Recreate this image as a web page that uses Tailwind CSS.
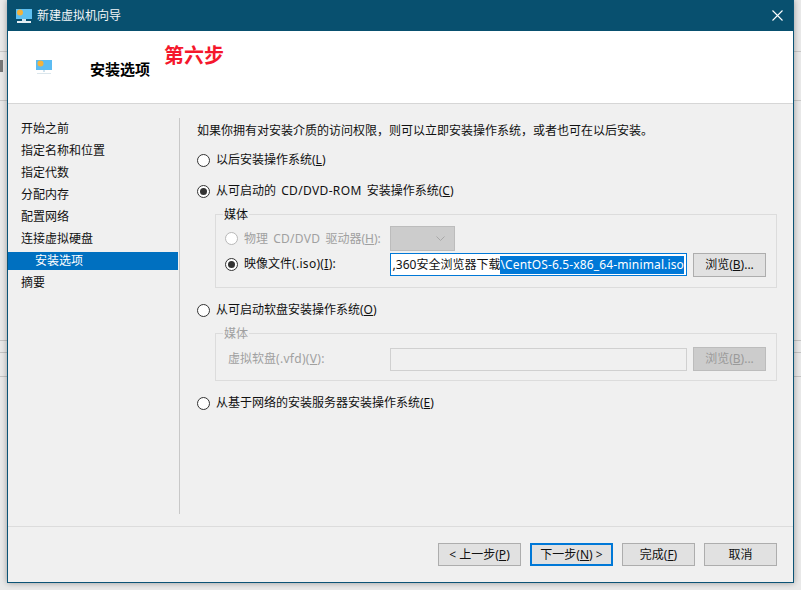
<!DOCTYPE html>
<html lang="zh-CN">
<head>
<meta charset="UTF-8">
<title>新建虚拟机向导</title>
<script src="https://cdn.jsdelivr.net/npm/@tailwindcss/browser@4"></script>
</head>
<body class="relative w-[801px] h-[590px] overflow-hidden bg-[#e9e9e9] text-[12px] leading-[16px] text-[#111] font-['Noto_Sans','Noto_Sans_CJK_SC',sans-serif]">
  <!-- app behind the dialog -->
  <div class="absolute left-0 right-0 top-[51px] h-px bg-[#c8c8c8]"></div>
  <div class="absolute left-0 right-0 top-[100px] h-px bg-[#c8c8c8]"></div>
  <div class="absolute left-0 right-0 top-[340px] h-px bg-[#c4c4c4]"></div>
  <div class="absolute left-0 right-0 top-[352px] h-px bg-[#c4c4c4]"></div>
  <div class="absolute left-0 right-0 top-[376px] h-px bg-[#c4c4c4]"></div>
  <div class="absolute left-0 top-[60px] w-[3px] h-[12px] bg-[#777]"></div>

  <!-- dialog -->
  <div class="relative ml-[7px] w-[787px] h-[583px] flex flex-col border-x border-b border-[#0b5376] bg-[#f0f0f0] shadow-[0_0_6px_rgba(0,0,0,0.35)]">
    <div class="h-[31px] shrink-0 flex items-center bg-[#08506f] text-[#f2f6f8]">
      <svg class="ml-[8px] w-[16px] h-[16px]" viewBox="0 0 16 16"><rect x="0" y="1" width="16" height="10" fill="#5fc0f2"/><circle cx="4" cy="4.5" r="3" fill="#f3b23c"/><rect x="6" y="11" width="4" height="2" fill="#cfe2ee"/><rect x="1" y="13" width="14" height="2" fill="#e6eef3"/></svg>
      <span class="ml-[5px] text-[12px]">新建虚拟机向导</span>
      <svg class="ml-auto mr-[10px] w-[11px] h-[11px]" viewBox="0 0 11 11" fill="none" stroke="#fff" stroke-width="1.1"><path d="M0.5 0.5L10.5 10.5M10.5 0.5L0.5 10.5"/></svg>
    </div>
    <div class="h-[73px] shrink-0 flex items-start bg-white border-b border-[#d6d6d6]">
      <svg class="ml-[28px] mt-[29px] w-[16px] h-[15px]" viewBox="0 0 16 15"><rect x="0" y="0" width="16" height="10" fill="#5cbcf2"/><circle cx="4.5" cy="3.5" r="3" fill="#f3b23c"/><rect x="7" y="10" width="2" height="2" fill="#cfe2ee"/><rect x="1" y="13" width="14" height="1" fill="#dbe6ec"/></svg>
      <span class="ml-[38px] mt-[29px] text-[15px] leading-[18px] font-bold text-black">安装选项</span>
      <span class="ml-[14px] mt-[13px] text-[20px] leading-[24px] font-bold text-[#f5172c]">第六步</span>
    </div>
    <div class="flex-1 flex min-h-0">
      <nav class="w-[170px] shrink-0 pt-[14px] flex flex-col">
        <div class="h-[22px] pl-[13px] flex items-center">开始之前</div>
        <div class="h-[22px] pl-[13px] flex items-center">指定名称和位置</div>
        <div class="h-[22px] pl-[13px] flex items-center">指定代数</div>
        <div class="h-[22px] pl-[13px] flex items-center">分配内存</div>
        <div class="h-[22px] pl-[13px] flex items-center">配置网络</div>
        <div class="h-[22px] pl-[13px] flex items-center">连接虚拟硬盘</div>
        <div class="h-[18px] mt-[2px] pl-[27px] flex items-center bg-[#0070c0] text-white">安装选项</div>
        <div class="h-[22px] mt-[2px] pl-[13px] flex items-center">摘要</div>
      </nav>
      <div class="w-px ml-px mt-[14px] h-[396px] bg-[#c8c8c8]"></div>
      <main class="flex-1 pl-[17px] pt-[19px] pr-[16px]">
        <p class="h-[16px]">如果你拥有对安装介质的访问权限，则可以立即安装操作系统，或者也可在以后安装。</p>
        <label class="mt-[13px] h-[16px] flex items-center gap-[6px]">
          <span class="w-[13px] h-[13px] rounded-full border border-[#333] bg-white"></span><span>以后安装操作系统(<u>L</u>)</span>
        </label>
        <label class="mt-[15px] h-[16px] flex items-center gap-[6px]">
          <span class="w-[13px] h-[13px] rounded-full border border-[#333] bg-white flex items-center justify-center"><span class="w-[7px] h-[7px] rounded-full bg-[#333]"></span></span><span class="[word-spacing:2px]">从可启动的 <span class="tracking-[0.35px]">CD/DVD-ROM</span> 安装操作系统(<u>C</u>)</span>
        </label>
        <fieldset class="mt-[15px] ml-[18px] w-[562px] h-[74px] relative border border-[#dcdcdc]">
          <legend class="absolute left-[7px] -top-[7px] px-px bg-[#f0f0f0] leading-[14px]">媒体</legend>
          <div class="pl-[9px] pt-[11px] flex items-center">
            <span class="w-[13px] h-[13px] rounded-full border border-[#b8b8b8] bg-white"></span>
            <span class="ml-[6px] w-[146px] text-[#a0a0a0] [word-spacing:2px]">物理 <span class="tracking-[0.3px]">CD/DVD</span> 驱动器(<u>H</u>):</span>
            <span class="w-[65px] h-[25px] border border-[#bcbcbc] bg-[#cccccc] flex items-center justify-end pr-[9px]">
              <svg class="w-[9px] h-[5px]" viewBox="0 0 9 5" fill="none" stroke="#a8a8a8"><path d="M0.5 0.5L4.5 4.5L8.5 0.5"/></svg>
            </span>
          </div>
          <div class="pl-[9px] mt-[2px] flex items-start">
            <span class="mt-[5px] w-[13px] h-[13px] rounded-full border border-[#333] bg-white flex items-center justify-center"><span class="w-[7px] h-[7px] rounded-full bg-[#333]"></span></span>
            <span class="mt-[3px] ml-[6px] w-[146px]">映像文件<span class="tracking-[0.3px]">(.iso)(<u>I</u>):</span></span>
            <span class="w-[297px] h-[23px] border border-[#0078d7] bg-white flex items-center justify-end overflow-hidden whitespace-nowrap pr-[2px]"><span class="shrink-0">,360安全浏览器下载</span><span class="shrink-0 bg-[#0078d7] text-white h-[18px] leading-[18px] tracking-[0.14px]">\CentOS-6.5-x86_64-minimal.iso</span></span>
            <span class="ml-[6px] w-[73px] h-[24px] border border-[#adadad] bg-[#e1e1e1] flex items-center justify-center">浏览(<u>B</u>)...</span>
          </div>
        </fieldset>
        <label class="mt-[14px] h-[16px] flex items-center gap-[6px]">
          <span class="w-[13px] h-[13px] rounded-full border border-[#333] bg-white"></span><span>从可启动软盘安装操作系统(<u>O</u>)</span>
        </label>
        <fieldset class="mt-[15px] ml-[18px] w-[562px] h-[48px] relative border border-[#dcdcdc]">
          <legend class="absolute left-[7px] -top-[7px] px-px bg-[#f0f0f0] leading-[14px] text-[#a0a0a0]">媒体</legend>
          <div class="pl-[12px] pt-[13px] flex items-center">
            <span class="w-[162px] text-[#a0a0a0]">虚拟软盘<span class="tracking-[0.3px]">(.vfd)(<u>V</u>):</span></span>
            <span class="w-[297px] h-[23px] border border-[#d0d0d0] bg-[#f0f0f0]"></span>
            <span class="ml-[6px] w-[73px] h-[24px] border border-[#bcbcbc] bg-[#cccccc] text-[#9a9a9a] flex items-center justify-center">浏览(<u>B</u>)...</span>
          </div>
        </fieldset>
        <label class="mt-[14px] h-[16px] flex items-center gap-[6px]">
          <span class="w-[13px] h-[13px] rounded-full border border-[#333] bg-white"></span><span>从基于网络的安装服务器安装操作系统(<u>E</u>)</span>
        </label>
      </main>
    </div>
    <footer class="h-[56px] shrink-0 border-t border-[#dcdcdc] flex items-start justify-end pt-[16px] pr-[16px]">
      <button class="w-[83px] h-[23px] border border-[#adadad] bg-[#e1e1e1]">&lt; 上一步(<u>P</u>)</button>
      <button class="ml-[9px] w-[83px] h-[23px] border-2 border-[#0078d7] bg-[#e1e1e1]">下一步(<u>N</u>) &gt;</button>
      <button class="ml-[9px] w-[73px] h-[23px] border border-[#adadad] bg-[#e1e1e1]">完成(<u>F</u>)</button>
      <button class="ml-[9px] w-[73px] h-[23px] border border-[#adadad] bg-[#e1e1e1]">取消</button>
    </footer>
  </div>
</body>
</html>
